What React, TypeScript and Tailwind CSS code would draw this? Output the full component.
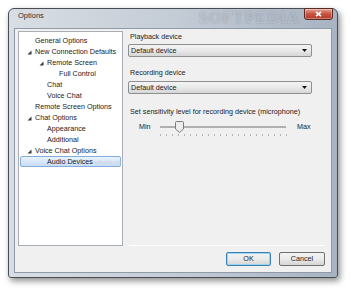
import React from 'react';

type Node = { label: string; level: number; expanded?: boolean; selected?: boolean };

const tree: Node[] = [
    { label: 'General Options', level: 0 },
    { label: 'New Connection Defaults', level: 0, expanded: true },
    { label: 'Remote Screen', level: 1, expanded: true },
    { label: 'Full Control', level: 2 },
    { label: 'Chat', level: 1 },
    { label: 'Voice Chat', level: 1 },
    { label: 'Remote Screen Options', level: 0 },
    { label: 'Chat Options', level: 0, expanded: true },
    { label: 'Appearance', level: 1 },
    { label: 'Additional', level: 1 },
    { label: 'Voice Chat Options', level: 0, expanded: true },
    { label: 'Audio Devices', level: 1, selected: true },
];

const indent = ['pl-[14px]', 'pl-[26px]', 'pl-[38px]'];

function Expander() {
    return (
        <svg width="5" height="5" viewBox="0 0 5 5" className="absolute left-[-8px] top-[3px]">
            <path d="M4.5 0.5 L4.5 4.5 L0.5 4.5 Z" fill="#3a3a3a" />
        </svg>
    );
}

function Combo() {
    return (
        <div className="h-[13px] w-[184px] flex items-center justify-between rounded-[2px] border border-[#8e8f8f] bg-gradient-to-b from-[#f4f4f4] via-[#e9e9e9] to-[#d6d6d6] pl-[2px] pr-[4px]">
            <span>Default device</span>
            <svg width="5" height="3" viewBox="0 0 5 3">
                <path d="M0 0 H5 L2.5 3 Z" fill="#111" />
            </svg>
        </div>
    );
}

function Button({ label, primary }: { label: string; primary?: boolean }) {
    return (
        <div
            className={
                'h-[14px] flex items-center justify-center rounded-[2px] border bg-gradient-to-b from-[#f2f2f2] via-[#ebebeb] to-[#d4d4d4] ' +
                (primary ? 'w-[45px] border-[#3c7fb1] shadow-[inset_0_0_0_1px_#9bd3f2]' : 'w-[46px] border-[#707070]')
            }
        >
            {label}
        </div>
    );
}

export default function App() {
    const ticks = Array.from({ length: 22 });

    return (
        <div className="w-[350px] h-[291px] bg-white pt-[8px] pl-[8px] font-['Liberation_Sans',Arial,sans-serif] text-[7.2px] leading-[10px] text-[#1b1b1b]">
            <div className="w-[330px] h-[270px] flex flex-col rounded-t-[6px] rounded-b-[3px] border border-[#474c55] bg-gradient-to-r from-[#d9dee4] via-[#c4ccd6] to-[#a8b3c2] shadow-[2px_3px_6px_rgba(0,0,0,0.45)] px-[5px] pb-[4px]">
                <div className="relative h-[19px] pl-[4px] pt-[2px]">
                    <span className="text-[#2b2f36] text-[7.5px]">Options</span>
                    <span className="absolute left-[185px] top-[1px] font-['Liberation_Serif',serif] text-[16px] leading-[16px] font-bold tracking-[1px] text-white/30 [text-shadow:0_0_2px_rgba(60,70,90,0.35)]">
                        SOFTPEDIA
                    </span>
                    <div className="absolute right-[-1px] top-[-1px] w-[29px] h-[12px] rounded-b-[3px] border border-[#5a2a25] bg-gradient-to-b from-[#e3a297] via-[#c8513f] to-[#b43826] flex items-center justify-center shadow-[inset_0_0_0_1px_rgba(255,255,255,0.35)]">
                        <svg width="7" height="6" viewBox="0 0 7 6">
                            <path d="M1 0.8 L6 5.2 M6 0.8 L1 5.2" stroke="#fff" strokeWidth="1.6" />
                        </svg>
                    </div>
                </div>

                <div className="flex-1 flex border border-[#8f9aa8] bg-[#f0f0f0]">
                    <div className="ml-[3px] mt-[2px] w-[105px] h-[215px] border border-[#a9adb5] bg-white pt-[3px] pl-[1px] pr-[1px]">
                        {tree.map((n) => (
                            <div
                                key={n.label}
                                className={
                                    'relative h-[11px] flex items-center whitespace-nowrap rounded-[2px] border ' +
                                    (n.selected
                                        ? 'border-[#84acdd] bg-gradient-to-b from-[#eaf3fd] to-[#c7dcf6]'
                                        : 'border-transparent')
                                }
                            >
                                <div className={'relative shrink-0 ' + indent[n.level]}>
                                    <span className="relative">
                                        {n.expanded && <Expander />}
                                        {n.label}
                                    </span>
                                </div>
                                {n.selected && (
                                    <span className="ml-[1px] text-[#cdd4dc] text-[5px] tracking-[-0.2px]">softpedia.com</span>
                                )}
                            </div>
                        ))}
                    </div>

                    <div className="flex-1 flex flex-col pl-[5px] pr-[6px]">
                        <div className="mt-[3px] h-[10px] pl-[2px]">Playback device</div>
                        <div className="mt-[2px]">
                            <Combo />
                        </div>
                        <div className="mt-[11px] h-[10px] pl-[2px]">Recording device</div>
                        <div className="mt-[3px]">
                            <Combo />
                        </div>
                        <div className="mt-[13px] h-[10px] pl-[2px] whitespace-nowrap">Set sensitivity level for recording device (microphone)</div>
                        <div className="mt-[4px] h-[12px] flex items-center pl-[11px]">
                            <span className="w-[21px]">Min</span>
                            <div className="relative w-[126px] h-[12px] flex items-center">
                                <div className="w-full h-[2px] border border-[#b0b0b0] bg-[#e7e7e7]" />
                                <svg width="9" height="12" viewBox="0 0 9 12" className="absolute left-[15px] top-0">
                                    <path d="M0.5 1.5 Q0.5 0.5 1.5 0.5 H7.5 Q8.5 0.5 8.5 1.5 V8 L4.5 11.5 L0.5 8 Z" fill="#ececec" stroke="#7a7a7a" />
                                </svg>
                            </div>
                            <span className="ml-[11px]">Max</span>
                        </div>
                        <div className="ml-[32px] mt-[1px] w-[127px] flex justify-between">
                            {ticks.map((_, i) => (
                                <div key={i} className="w-[1px] h-[2px] bg-[#b5b5b5]" />
                            ))}
                        </div>

                        <div className="flex-1" />
                        <div className="h-[1px] bg-[#d6d6d6] border-b border-white ml-[1px]" />
                        <div className="mt-[6px] mb-[6px] flex justify-end gap-[8px]">
                            <Button label="OK" primary />
                            <Button label="Cancel" />
                        </div>
                    </div>
                </div>
            </div>
        </div>
    );
}
